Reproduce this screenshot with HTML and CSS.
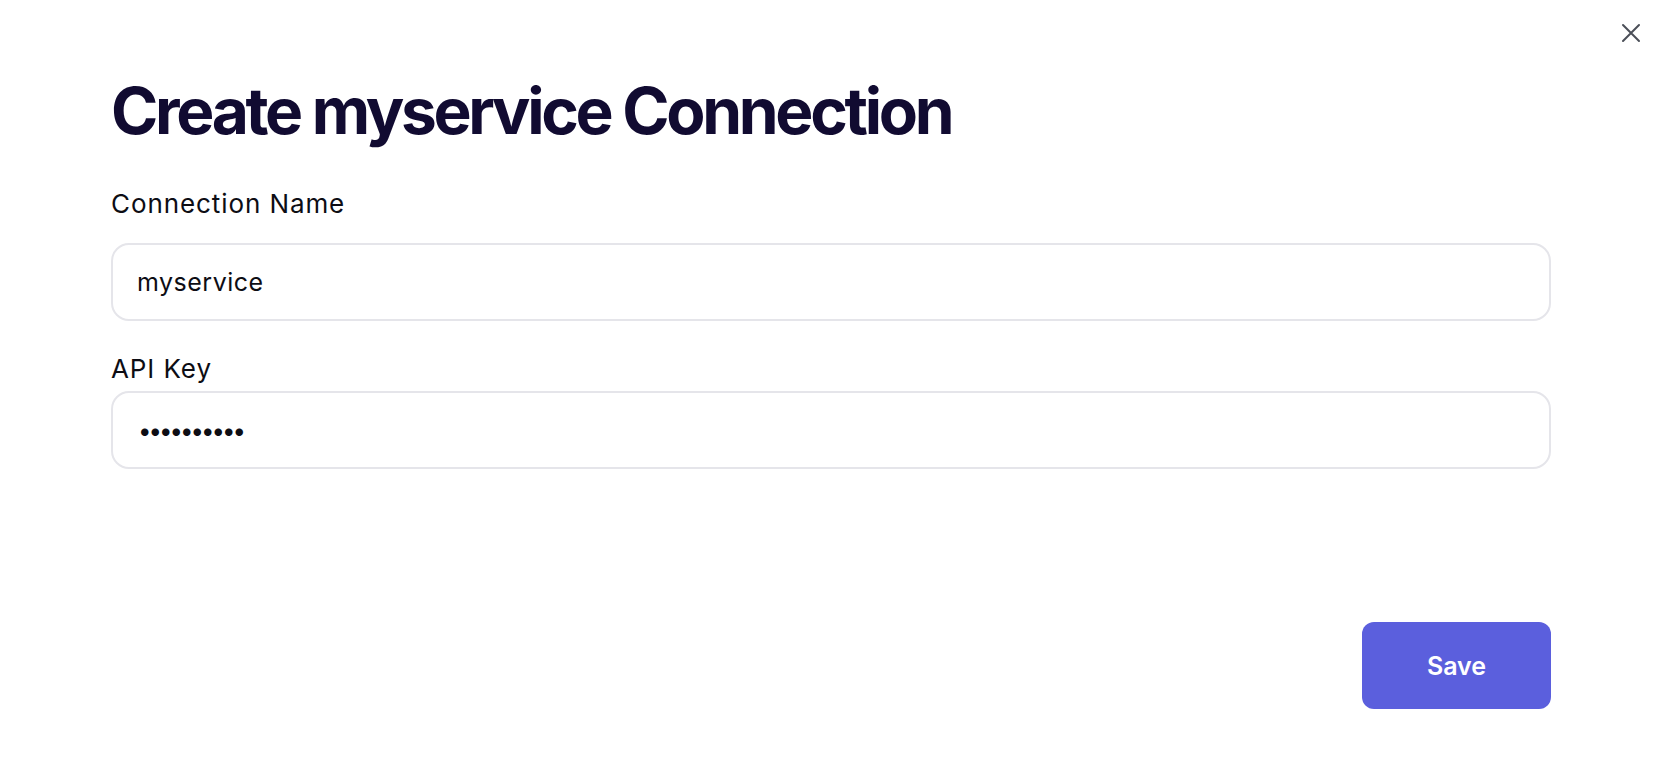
FILE: index.html
```html
<!DOCTYPE html>
<html>
<head>
  <title>Create myservice Connection</title>
  <link rel="stylesheet" href="styles.css">
</head>
<body>
  <div class="modal">
    <button class="close-btn" type="button" aria-label="Close">
      <svg width="20" height="20" viewBox="0 0 20 20" fill="none" stroke="#4b4f58" stroke-width="2" stroke-linecap="round">
        <path d="M2 2 L18 18 M18 2 L2 18"/>
      </svg>
    </button>

    <form class="connection-form" id="connection-form">
      <h1 class="title">Create myservice Connection</h1>

      <label class="field-label label-name" for="connection_name">Connection Name</label>
      <input class="field-input input-name" type="text" id="connection_name" name="connection_name" value="myservice">

      <label class="field-label label-api" for="api_key">API Key</label>
      <input class="field-input input-secret" type="text" id="api_key" name="api_key" value="••••••••••">

      <div class="form-actions">
        <button class="save-btn" type="submit">Save</button>
      </div>
    </form>
  </div>
</body>
</html>
```

FILE: styles.css
```css
body {
  margin: 0;
  background: #fff;
  font-family: Inter, "Noto Sans", sans-serif;
  color: #0d0d14;
}
.modal {
  position: relative;
  min-height: 772px;
  box-sizing: border-box;
  padding: 0 113px 0 111px;
}
.close-btn {
  position: absolute;
  top: 23px;
  right: 23px;
  width: 20px;
  height: 20px;
  padding: 0;
  border: none;
  background: none;
  cursor: pointer;
}
.connection-form {
  display: flex;
  flex-direction: column;
}
.title {
  margin: 71px 0 0;
  font-size: 64px;
  font-weight: 700;
  line-height: 80px;
  letter-spacing: -3.3px;
  color: #110b31;
}
.field-label {
  font-size: 26px;
  line-height: 30px;
  letter-spacing: 0.035em;
  color: #0d0d14;
}
.label-name {
  margin-top: 38px;
}
.label-api {
  margin-top: 33px;
}
.field-input {
  height: 78px;
  box-sizing: border-box;
  padding: 0 24px;
  border: 2px solid #e5e5ea;
  border-radius: 18px;
  font-family: inherit;
  font-size: 25px;
  letter-spacing: 0.02em;
  color: #0d0d14;
  outline: none;
}
.input-name {
  margin-top: 24px;
}
.input-secret {
  margin-top: 7px;
  padding-left: 25px;
  font-size: 24px;
  letter-spacing: -3px;
}
.form-actions {
  display: flex;
  justify-content: flex-end;
  margin-top: 153px;
}
.save-btn {
  width: 189px;
  height: 87px;
  border: none;
  border-radius: 12px;
  background: #5b5fdd;
  color: #fff;
  font-family: inherit;
  font-size: 25px;
  font-weight: 600;
  cursor: pointer;
}
```
